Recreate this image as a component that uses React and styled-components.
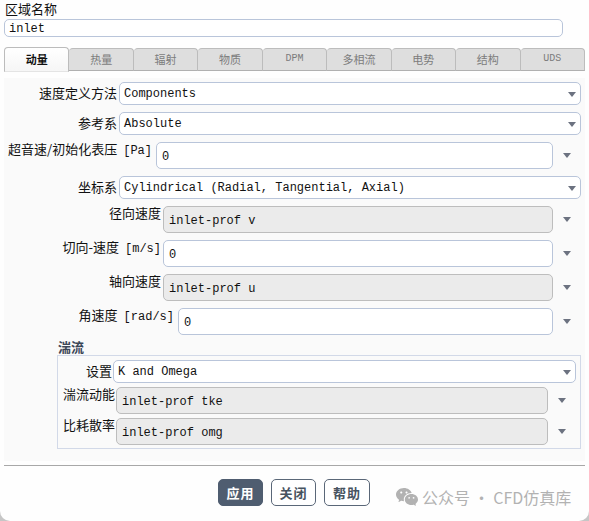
import React from "react";
import styled, { createGlobalStyle } from "styled-components";
import { RiWechatFill } from "react-icons/ri";

const MONO = `"Liberation Mono", "Noto Sans CJK SC", monospace`;
const CJK = `"Noto Sans CJK SC", "Liberation Mono", sans-serif`;

const GlobalStyle = createGlobalStyle`
  html, body {
    margin: 0;
    padding: 0;
    background: #fefefe;
  }
`;

const Page = styled.div`
  position: relative;
  box-sizing: border-box;
  width: 589px;
  height: 521px;
  overflow: hidden;
  padding: 0 4px;
  font-family: ${MONO};
  font-size: 12px;
  color: #111;
`;

// window edge: only the two rounded bottom corners show
const WindowEdge = styled.div`
  position: absolute;
  inset: 0;
  border-radius: 0 0 10px 10px;
  box-shadow: 0 0 1px 6px #c6c6c6;
  pointer-events: none;
`;

const NameLabel = styled.div`
  font-family: ${CJK};
  font-size: 13px;
  line-height: 17px;
  height: 19px;
  padding-left: 1px;
`;

const Field = styled.div`
  box-sizing: border-box;
  flex: 1;
  min-width: 0;
  display: flex;
  align-items: center;
  justify-content: space-between;
  height: ${(props) => (props.tall ? 27 : 23)}px;
  padding: ${(props) => (props.tall ? "2px 5px 0" : "1px 4px 0")};
  border: 1px solid ${(props) => (props.gray ? "#bdbdbd" : "#b9c5da")};
  border-radius: 5px;
  background: ${(props) => (props.gray ? "#ebebeb" : "#fff")};
  white-space: pre;
`;

const NameInput = styled(Field)`
  width: 559px;
  flex: none;
  height: 18px;
  padding-top: 2px;
`;

const Tabs = styled.div`
  display: flex;
  align-items: flex-end;
  height: 24px;
  margin-top: 10px;
`;

const Tab = styled.div`
  box-sizing: border-box;
  flex: 1;
  height: ${(props) => (props.active ? 25 : 23)}px;
  margin-bottom: ${(props) => (props.active ? -1 : 0)}px;
  padding-bottom: 2px;
  display: flex;
  align-items: center;
  justify-content: center;
  border: 1px solid #bcbcbc;
  border-left-width: ${(props) => (props.first ? 1 : 0)}px;
  border-bottom-color: ${(props) => (props.active ? "#e4e4e4" : "#b0b0b0")};
  border-radius: 4px 4px 0 0;
  background: ${(props) => (props.active ? "linear-gradient(#fff, #f6f6f6)" : "#dedede")};
  color: ${(props) => (props.active ? "#111" : "#7c7c7c")};
  font-family: ${(props) => (props.latin ? MONO : CJK)};
  font-size: ${(props) => (props.latin ? 10 : 11)}px;
  font-weight: ${(props) => (props.active ? 700 : 400)};
`;

const Panel = styled.div`
  display: flex;
  flex-direction: column;
  gap: 7px;
  height: 383px;
  box-sizing: border-box;
  margin-top: 7px;
  padding: 4px 4px 0 0;
  background: #fafafa;
`;

const Row = styled.div`
  display: flex;
  gap: ${(props) => props.gap}px;
`;

const Label = styled.div`
  flex: none;
  width: ${(props) => props.width}px;
  box-sizing: border-box;
  height: ${(props) => (props.tall ? 20 : 23)}px;
  line-height: ${(props) => (props.tall ? 14 : 21)}px;
  text-align: right;
  white-space: nowrap;
  font-family: ${CJK};
  font-size: 13px;
`;

const Unit = styled.span`
  font-family: ${MONO};
  font-size: 12px;
  margin-left: 6px;
`;

const Arrow = styled.span`
  flex: none;
  width: 0;
  height: 0;
  border-left: 4px solid transparent;
  border-right: 4px solid transparent;
  border-top: 5px solid #6c7280;
`;

const ArrowSlot = styled.div`
  flex: none;
  box-sizing: border-box;
  width: ${(props) => 28 - props.gap}px;
  height: 27px;
  display: flex;
  align-items: center;
  padding-left: ${(props) => 10 - props.gap}px;
`;

const SectionTitle = styled.div`
  font-family: ${CJK};
  font-size: 13px;
  font-weight: 700;
  line-height: 13px;
  color: #3b4656;
  padding-left: 54px;
  margin-top: -2px;
`;

const Group = styled.div`
  display: flex;
  flex-direction: column;
  gap: 4px;
  box-sizing: border-box;
  width: 524px;
  height: 94px;
  margin: -5px 0 0 53px;
  padding: 4px 4px 0 0;
  border: 1px solid #d2d9e8;
`;

const Divider = styled.div`
  height: 1px;
  margin-top: 4px;
  background: #a8a8a8;
`;

const Footer = styled.div`
  display: flex;
  margin-top: 13px;
  padding-left: 214px;
  gap: 8px;
`;

const Button = styled.div`
  box-sizing: border-box;
  width: ${(props) => props.width}px;
  height: 27px;
  display: flex;
  align-items: center;
  justify-content: center;
  border: 1px solid ${(props) => (props.primary ? "#4f5d70" : "#5a6778")};
  border-radius: 5px;
  background: ${(props) => (props.primary ? "#4f5d70" : "#fff")};
  color: ${(props) => (props.primary ? "#fff" : "#47535f")};
  font-family: ${CJK};
  font-size: 13px;
  font-weight: 700;
  letter-spacing: 1px;
`;

const Watermark = styled.div`
  position: absolute;
  left: 395px;
  top: 485px;
  display: flex;
  align-items: center;
  gap: 3px;
  color: #b2b2b2;
  font-family: ${CJK};
  font-size: 16px;
  line-height: 24px;
  white-space: nowrap;
`;

const TABS = ["动量", "热量", "辐射", "物质", "DPM", "多相流", "电势", "结构", "UDS"];

// select row: the arrow sits inside the box
const SelectRow = ({ label, labelWidth, value, gap = 2 }) => (
  <Row gap={gap}>
    <Label width={labelWidth}>{label}</Label>
    <Field>
      {value}
      <Arrow />
    </Field>
  </Row>
);

// input row: the arrow sits beside the box
const InputRow = ({ label, unit, labelWidth, value, gray, gap }) => (
  <Row gap={gap}>
    <Label width={labelWidth} tall>
      {label}
      {unit && <Unit>{unit}</Unit>}
    </Label>
    <Field tall gray={gray}>
      {value}
    </Field>
    <ArrowSlot gap={gap}>
      <Arrow />
    </ArrowSlot>
  </Row>
);

const App = () => (
  <Page>
    <GlobalStyle />
    <NameLabel>区域名称</NameLabel>
    <NameInput>inlet</NameInput>
    <Tabs>
      {TABS.map((tab, i) => (
        <Tab key={tab} active={i === 0} first={i === 0} latin={/^[A-Z]+$/.test(tab)}>
          {tab}
        </Tab>
      ))}
    </Tabs>
    <Panel>
      <SelectRow label="速度定义方法" labelWidth={113} value="Components" />
      <SelectRow label="参考系" labelWidth={113} value="Absolute" />
      <InputRow label="超音速/初始化表压" unit="[Pa]" labelWidth={148} gap={4} value="0" />
      <SelectRow
        label="坐标系"
        labelWidth={113}
        value="Cylindrical (Radial, Tangential, Axial)"
      />
      <InputRow label="径向速度" labelWidth={157} gap={2} value="inlet-prof v" gray />
      <InputRow label="切向-速度" unit="[m/s]" labelWidth={157} gap={2} value="0" />
      <InputRow label="轴向速度" labelWidth={157} gap={2} value="inlet-prof u" gray />
      <InputRow label="角速度" unit="[rad/s]" labelWidth={170} gap={4} value="0" />
      <SectionTitle>湍流</SectionTitle>
      <Group>
        <SelectRow label="设置" labelWidth={54} gap={1} value="K and Omega" />
        <InputRow label="湍流动能" labelWidth={57} gap={1} value="inlet-prof tke" gray />
        <InputRow label="比耗散率" labelWidth={57} gap={1} value="inlet-prof omg" gray />
      </Group>
    </Panel>
    <Divider />
    <Footer>
      <Button primary width={45}>
        应用
      </Button>
      <Button width={45}>关闭</Button>
      <Button width={46}>帮助</Button>
    </Footer>
    <Watermark>
      <RiWechatFill size={24} />
      公众号 · CFD仿真库
    </Watermark>
    <WindowEdge />
  </Page>
);

export default App;
